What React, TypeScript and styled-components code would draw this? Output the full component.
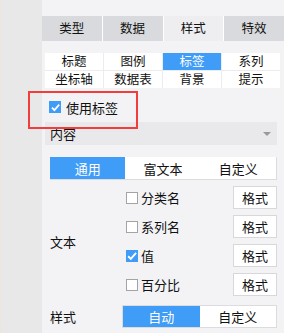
import React, { useState } from 'react';
import styled, { createGlobalStyle } from 'styled-components';

const GlobalStyle = createGlobalStyle`
  html, body {
    margin: 0;
    padding: 0;
    background: #f3f3f6;
  }
  body {
    font-family: 'Noto Sans CJK SC', 'Noto Sans', sans-serif;
    font-size: 12px;
    color: #111;
  }
`;

const BLUE = '#3f9cf7';

const Screen = styled.div`
  position: relative;
  display: flex;
  width: 284px;
  height: 333px;
  overflow: hidden;
`;

const Strip = styled.div`
  width: 42px;
  flex: none;
  background: #e8e8e8;
  border-left: 1px solid #ece6da;
  box-sizing: border-box;
`;

const Panel = styled.div`
  flex: 1;
  background: #f3f3f6;
  padding-top: 16px;
  display: flex;
  flex-direction: column;
`;

const TabBar = styled.div`
  display: flex;
  gap: 1px;
  background: #fff;
  height: 25px;
`;

const Tab = styled.div<{ active?: boolean }>`
  flex: 1;
  display: flex;
  align-items: center;
  justify-content: center;
  background: ${(p) => (p.active ? '#eeeef1' : '#d9dadd')};
  line-height: 1;
  font-size: 12.5px;
`;

const SubGrid = styled.div`
  margin: 12px 4px 0 3px;
  display: grid;
  grid-template-columns: repeat(4, 1fr);
  gap: 1px;
  background: #ececef;
`;

const SubItem = styled.div<{ active?: boolean }>`
  height: 17px;
  display: flex;
  align-items: center;
  justify-content: center;
  background: ${(p) => (p.active ? BLUE : '#fff')};
  color: ${(p) => (p.active ? '#fff' : '#111')};
  line-height: 1;
  font-size: 12.5px;
`;

const CheckRow = styled.label`
  display: flex;
  align-items: center;
  gap: 5px;
  height: 22px;
  margin: 8px 0 0 7px;
  font-size: 13px;
`;

const Box = styled.span<{ checked?: boolean }>`
  width: 12px;
  height: 12px;
  flex: none;
  box-sizing: border-box;
  display: flex;
  align-items: center;
  justify-content: center;
  background: ${(p) => (p.checked ? BLUE : '#fff')};
  border: ${(p) => (p.checked ? 'none' : '1px solid #a4a4a4')};
`;

const Select = styled.div`
  margin: 4px 7px 0 3px;
  height: 23px;
  background: #e9e9ec;
  display: flex;
  align-items: center;
  justify-content: space-between;
  padding: 0 6px 0 5px;
  font-size: 13px;
`;

const Caret = styled.span`
  width: 0;
  height: 0;
  border-left: 4px solid transparent;
  border-right: 4px solid transparent;
  border-top: 4px solid #999;
`;

const Segment = styled.div<{ cols: number }>`
  display: grid;
  grid-template-columns: repeat(${(p) => p.cols}, 1fr);
  background: #fff;
  border: 1px solid #dcdcdf;
  border-top: none;
  border-left: none;
`;

const SegItem = styled.div<{ active?: boolean }>`
  display: flex;
  align-items: center;
  justify-content: center;
  background: ${(p) => (p.active ? BLUE : '#fff')};
  color: ${(p) => (p.active ? '#fff' : '#111')};
  line-height: 1;
  font-size: 13px;
`;

const ContentTabs = styled(Segment)`
  margin: 12px 7px 0 8px;
  height: 22px;
`;

const Section = styled.div`
  display: flex;
  margin: 6px 7px 0 8px;
`;

const SideLabel = styled.div`
  width: 76px;
  flex: none;
  display: flex;
  align-items: center;
  font-size: 13px;
`;

const Rows = styled.div`
  flex: 1;
  display: flex;
  flex-direction: column;
  gap: 6px;
`;

const OptRow = styled.div`
  display: flex;
  align-items: center;
  gap: 3px;
  height: 23px;
  font-size: 13px;
`;

const OptText = styled.span`
  flex: 1;
`;

const FormatBtn = styled.button`
  width: 44px;
  height: 23px;
  box-sizing: border-box;
  border: 1px solid #d8d8db;
  background: #fff;
  font-family: inherit;
  font-size: 13px;
  color: #111;
  padding: 0;
  line-height: 1;
`;

const StyleSection = styled.div`
  display: flex;
  align-items: center;
  margin: 9px 7px 0 8px;
  height: 22px;
`;

const StyleLabel = styled(SideLabel)`
  width: 72px;
`;

const StyleSeg = styled(Segment)`
  flex: 1;
  height: 21px;
  border: 1px solid #dcdcdf;
`;

const Annotation = styled.div`
  position: absolute;
  left: 28px;
  top: 91px;
  width: 110px;
  height: 38px;
  box-sizing: border-box;
  border: 2px solid #f23d3d;
  pointer-events: none;
`;

const Tick = ({ size = 10 }: { size?: number }) => (
  <svg width={size} height={size} viewBox="0 0 10 10">
    <path d="M1.8 5.2 L4 7.4 L8.4 2.4" fill="none" stroke="#fff" strokeWidth="1.6" />
  </svg>
);

const options = [
  { name: '分类名', checked: false },
  { name: '系列名', checked: false },
  { name: '值', checked: true },
  { name: '百分比', checked: false },
];

export default function App() {
  const [useLabel] = useState(true);
  return (
    <>
      <GlobalStyle />
      <Screen>
        <Strip />
        <Panel>
          <TabBar>
            <Tab>类型</Tab>
            <Tab>数据</Tab>
            <Tab active>样式</Tab>
            <Tab>特效</Tab>
          </TabBar>
          <SubGrid>
            {['标题', '图例', '标签', '系列', '坐标轴', '数据表', '背景', '提示'].map((t) => (
              <SubItem key={t} active={t === '标签'}>
                {t}
              </SubItem>
            ))}
          </SubGrid>
          <CheckRow>
            <Box checked={useLabel}>
              <Tick size={11} />
            </Box>
            使用标签
          </CheckRow>
          <Select>
            内容
            <Caret />
          </Select>
          <ContentTabs cols={3}>
            <SegItem active>通用</SegItem>
            <SegItem>富文本</SegItem>
            <SegItem>自定义</SegItem>
          </ContentTabs>
          <Section>
            <SideLabel>文本</SideLabel>
            <Rows>
              {options.map((o) => (
                <OptRow key={o.name}>
                  <Box checked={o.checked}>{o.checked && <Tick size={12} />}</Box>
                  <OptText>{o.name}</OptText>
                  <FormatBtn>格式</FormatBtn>
                </OptRow>
              ))}
            </Rows>
          </Section>
          <StyleSection>
            <StyleLabel>样式</StyleLabel>
            <StyleSeg cols={2}>
              <SegItem active>自动</SegItem>
              <SegItem>自定义</SegItem>
            </StyleSeg>
          </StyleSection>
        </Panel>
        <Annotation />
      </Screen>
    </>
  );
}
